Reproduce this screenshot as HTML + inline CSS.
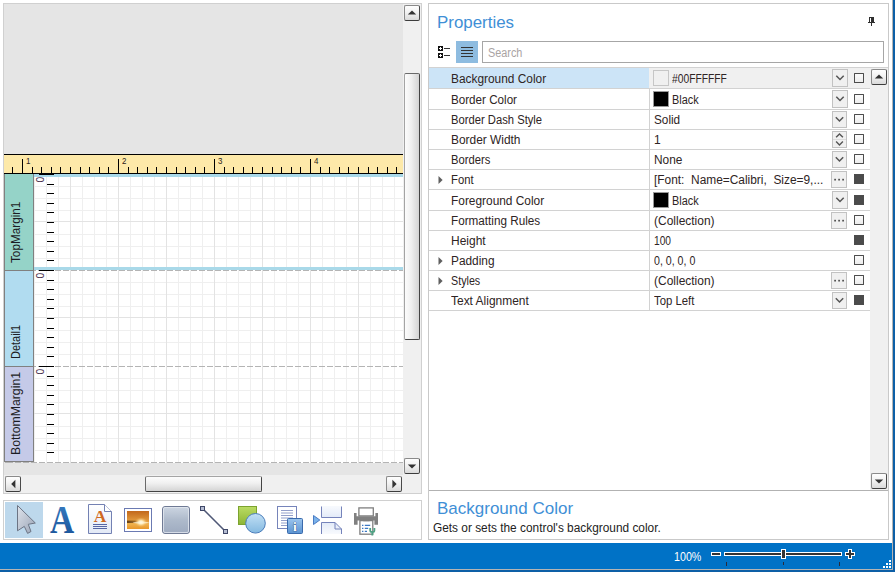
<!DOCTYPE html>
<html><head><meta charset="utf-8"><title>Report Designer</title>
<style>
*{box-sizing:border-box;margin:0;padding:0}
html,body{width:895px;height:572px;overflow:hidden;background:#fff;font-family:"Liberation Sans",sans-serif;font-size:12px;color:#2e2424}
div,i,span,svg{position:absolute}
i{display:block}
#des{left:3px;top:3px;width:419px;height:491px;background:#e5e5e5;border:1px solid #d0d0d0}
#ruler{left:4px;top:154px;width:399px;height:20px;background:#fde9a9;border-top:1px solid #000;border-bottom:1px solid #000}
.tk{top:12px;width:1px;height:6px;background:#000}
.tk.L{top:4px;height:14px}
.rl{top:0.5px;font-size:9px;line-height:10px;color:#2a2218;margin-left:-0.5px;transform:scaleX(0.88);transform-origin:0 0}
#grid{left:34px;top:174px;width:369px;height:289px;background-color:#fff;
 background-image:
 linear-gradient(to right,#e3e3e3 1px,transparent 1px),
 linear-gradient(to bottom,transparent 12px,#efefef 12px 13px,transparent 13px 24px,#efefef 24px 25px,transparent 25px 36px,#efefef 36px 37px,transparent 37px 47px,#e3e3e3 47px 48px,transparent 48px 60px,#efefef 60px 61px,transparent 61px 72px,#efefef 72px 73px,transparent 73px 84px,#efefef 84px 85px,transparent 85px),
 linear-gradient(to right,#efefef 1px,transparent 1px);
 background-size:48px 48px,100% 96px,12px 12px;
 background-position:-12px 0,0 0,0 0;}
.band{left:4px;width:30px;border-left:1px solid #808080;border-right:1px solid #808080;border-top:1px solid #808080}
.band span{left:2px;bottom:7px;height:17px;line-height:17px;white-space:nowrap;transform-origin:0 100%;transform:translate(17px,0) rotate(-90deg);font-size:13.33px;color:#1c1c24}
.v0{left:39px;width:15px;height:1px;background:#000}
.vt{left:47px;width:7px;height:1px;background:#000}
.z{left:36.3px;width:9px;height:9px;font-size:10.3px;line-height:9px;text-align:center;color:#4a3050;transform:rotate(-90deg)}
.sb{width:16px;height:16px;border:1px solid;border-color:#8a8a8a #4a4a4a #3c3c3c #8a8a8a;border-radius:2px;background:linear-gradient(#fefefe,#f2f2f2 45%,#dadada)}
.thumb{border:1px solid;border-color:#6a6a6a #444 #444 #a4a4a4;border-radius:2px}
.thumb.h{border-color:#a4a4a4 #444 #444 #6a6a6a}
.dash{left:5px;width:398px;height:1px;background:repeating-linear-gradient(to right,#b4b4b4 0 6px,transparent 6px 8px);background-position:2px 0}
#tools{left:3px;top:500px;width:419px;height:40px;background:#fff;border:1px solid #d0d0d0}
#prop{left:428px;top:3px;width:461px;height:537px;background:#fff;border:1px solid #c9c9c9}
.row{left:429px;width:441px}
.row .nm{left:0;top:0;width:220px;height:100%;white-space:nowrap}
.row .nm .t{left:22px;top:1px}
.row.sel .nm{background:#cce4f7}
.row.sel{background:#f0f0f0}
.vl{top:1px;white-space:nowrap}
.exp{left:9px}
.sw{left:224px;width:16px;height:16px;border:1px solid #c4c4c4}
.btn{left:403px;width:15px;background:#f0f0f0;border:1px solid #c2c2c2}
.btn svg{left:0;top:0}
.cb{left:425px;width:10px;height:10px;border:1px solid #4c4c4c;background:linear-gradient(#fbfbfb,#ececec);border-radius:0.5px}
.cb.on{background:#4b4b4b;border-color:#4b4b4b;border-radius:0}
.hl{left:429px;width:441px;height:1px;background:#d2d2d2}
#status{left:0;top:543px;width:895px;height:29px;background:#0072c6}
.ttl{font-size:17px;line-height:22px;color:#3f8fd6;white-space:nowrap}
</style></head><body>
<div id="des"></div>
<div id="ruler"><i class="tk" style="left:8px"></i><i class="tk L" style="left:18px"></i><span class="rl" style="left:22px">1</span><i class="tk" style="left:28px"></i><i class="tk" style="left:37px"></i><i class="tk" style="left:47px"></i><i class="tk" style="left:56px"></i><i class="tk" style="left:66px"></i><i class="tk" style="left:76px"></i><i class="tk" style="left:85px"></i><i class="tk" style="left:95px"></i><i class="tk" style="left:104px"></i><i class="tk L" style="left:114px"></i><span class="rl" style="left:118px">2</span><i class="tk" style="left:124px"></i><i class="tk" style="left:133px"></i><i class="tk" style="left:143px"></i><i class="tk" style="left:152px"></i><i class="tk" style="left:162px"></i><i class="tk" style="left:172px"></i><i class="tk" style="left:181px"></i><i class="tk" style="left:191px"></i><i class="tk" style="left:200px"></i><i class="tk L" style="left:210px"></i><span class="rl" style="left:214px">3</span><i class="tk" style="left:220px"></i><i class="tk" style="left:229px"></i><i class="tk" style="left:239px"></i><i class="tk" style="left:248px"></i><i class="tk" style="left:258px"></i><i class="tk" style="left:268px"></i><i class="tk" style="left:277px"></i><i class="tk" style="left:287px"></i><i class="tk" style="left:296px"></i><i class="tk L" style="left:306px"></i><span class="rl" style="left:310px">4</span><i class="tk" style="left:316px"></i><i class="tk" style="left:325px"></i><i class="tk" style="left:335px"></i><i class="tk" style="left:344px"></i><i class="tk" style="left:354px"></i><i class="tk" style="left:364px"></i><i class="tk" style="left:373px"></i><i class="tk" style="left:383px"></i><i class="tk" style="left:392px"></i></div>
<div id="grid"></div>
<div class="band" style="top:174px;height:96px;background:#95d3c8;border-top:none"><span style="transform:translate(17px,0) rotate(-90deg) scaleX(0.8811);">TopMargin1</span></div>
<div class="band" style="top:270px;height:96px;background:#b1dcf0;"><span style="transform:translate(17px,0) rotate(-90deg) scaleX(0.8235);">Detail1</span></div>
<div class="band" style="top:366px;height:96px;background:#c5cae8;border-bottom:1px solid #808080"><span style="transform:translate(17px,0) rotate(-90deg) scaleX(0.9184);bottom:6px">BottomMargin1</span></div>
<i style="left:34px;top:174px;width:369px;height:3px;background:#a9d9e9"></i>
<i style="left:34px;top:267px;width:369px;height:3px;background:#a9d9e9"></i>
<i class="dash" style="top:270px;left:34px;width:369px;background-position:5px 0"></i>
<i class="dash" style="top:366px;left:34px;width:369px;background-position:5px 0"></i>
<i class="dash" style="top:462px"></i>
<i class="v0" style="top:174px"></i><span class="z" style="top:175px">0</span><i class="vt" style="top:184px"></i><i class="vt" style="top:193px"></i><i class="vt" style="top:203px"></i><i class="vt" style="top:212px"></i><i class="vt" style="top:222px"></i><i class="vt" style="top:232px"></i><i class="vt" style="top:241px"></i><i class="vt" style="top:251px"></i><i class="vt" style="top:260px"></i><i class="v0" style="top:270px"></i><span class="z" style="top:271px">0</span><i class="vt" style="top:280px"></i><i class="vt" style="top:289px"></i><i class="vt" style="top:299px"></i><i class="vt" style="top:308px"></i><i class="vt" style="top:318px"></i><i class="vt" style="top:328px"></i><i class="vt" style="top:337px"></i><i class="vt" style="top:347px"></i><i class="vt" style="top:356px"></i><i class="v0" style="top:366px"></i><span class="z" style="top:367px">0</span><i class="vt" style="top:376px"></i><i class="vt" style="top:385px"></i><i class="vt" style="top:395px"></i><i class="vt" style="top:404px"></i><i class="vt" style="top:414px"></i><i class="vt" style="top:424px"></i><i class="vt" style="top:433px"></i><i class="vt" style="top:443px"></i><i class="vt" style="top:452px"></i>
<i style="left:403px;top:4px;width:18px;height:471px;background:#f0f0f0"></i>
<i style="left:4px;top:475px;width:417px;height:18px;background:#f0f0f0"></i>
<div class="sb" style="left:404px;top:5px"><svg width="14" height="14" viewBox="0 0 14 14"><path d="M2.8 8.6 L7 4.4 L11.2 8.6 Z" fill="#333"/></svg></div>
<div class="sb" style="left:404px;top:458px"><svg width="14" height="14" viewBox="0 0 14 14"><path d="M2.8 5.4 L7 9.6 L11.2 5.4 Z" fill="#333"/></svg></div>
<div class="thumb" style="left:404px;top:73px;width:16px;height:267px;background:linear-gradient(to right,#fcfcfc,#f0f0f0 45%,#d4d4d4)"></div>
<div class="sb" style="left:5px;top:476px"><svg width="14" height="14" viewBox="0 0 14 14"><path d="M9.4 2.8 L5.2 7 L9.4 11.2 Z" fill="#333"/></svg></div>
<div class="sb" style="left:386px;top:476px"><svg width="14" height="14" viewBox="0 0 14 14"><path d="M5.4 2.8 L9.6 7 L5.4 11.2 Z" fill="#333"/></svg></div>
<div class="thumb h" style="left:145px;top:476px;width:117px;height:16px;background:linear-gradient(#fcfcfc,#f0f0f0 45%,#d4d4d4)"></div>
<div id="tools"></div>
<i style="left:5px;top:502px;width:38px;height:36px;background:#bdd8ec"></i>
<svg style="left:4px;top:501px" width="417" height="38" viewBox="4 501 417 38">
<defs>
<linearGradient id="gA" x1="0" y1="0" x2="0" y2="1"><stop offset="0" stop-color="#3a80c6"/><stop offset="1" stop-color="#174f94"/></linearGradient>
<linearGradient id="gP" x1="0" y1="0" x2="1" y2="1"><stop offset="0" stop-color="#dfe4ec"/><stop offset="1" stop-color="#9aa4b6"/></linearGradient>
<linearGradient id="gPg" x1="0" y1="0" x2="0" y2="1"><stop offset="0" stop-color="#ffffff"/><stop offset="1" stop-color="#e2e9f6"/></linearGradient>
<linearGradient id="gPn" x1="0" y1="0" x2="0" y2="1"><stop offset="0" stop-color="#cdd6e2"/><stop offset="0.5" stop-color="#aebacb"/><stop offset="1" stop-color="#9eabc0"/></linearGradient>
<linearGradient id="gGr" x1="0" y1="0" x2="0" y2="1"><stop offset="0" stop-color="#bbdc64"/><stop offset="1" stop-color="#8db535"/></linearGradient>
<linearGradient id="gCi" x1="0" y1="0" x2="0" y2="1"><stop offset="0" stop-color="#c2e0f5"/><stop offset="1" stop-color="#84b9e0"/></linearGradient>
<linearGradient id="gIn" x1="0" y1="0" x2="0" y2="1"><stop offset="0" stop-color="#9cc5ee"/><stop offset="1" stop-color="#5a93d2"/></linearGradient>
<linearGradient id="gSk" x1="0" y1="0" x2="0" y2="1"><stop offset="0" stop-color="#c2681b"/><stop offset="0.55" stop-color="#e29a3d"/><stop offset="0.72" stop-color="#efb24e"/><stop offset="1" stop-color="#e8962a"/></linearGradient>
<linearGradient id="gHz" x1="0" y1="0" x2="1" y2="0"><stop offset="0" stop-color="#4a2e10" stop-opacity="0.85"/><stop offset="0.6" stop-color="#6a4418" stop-opacity="0.6"/><stop offset="1" stop-color="#8a5a20" stop-opacity="0"/></linearGradient>
<radialGradient id="gSun" cx="0.5" cy="0.5" r="0.5"><stop offset="0" stop-color="#fff"/><stop offset="0.35" stop-color="#fff3c8" stop-opacity="0.9"/><stop offset="1" stop-color="#f0b050" stop-opacity="0"/></radialGradient>
<linearGradient id="gFade" x1="0" y1="0" x2="0" y2="1"><stop offset="0" stop-color="#e6edf9" stop-opacity="0.3"/><stop offset="1" stop-color="#e2eaf8"/></linearGradient>
<linearGradient id="gFade2" x1="0" y1="0" x2="0" y2="1"><stop offset="0" stop-color="#e2eaf8"/><stop offset="1" stop-color="#e6edf9" stop-opacity="0.3"/></linearGradient>
</defs>
<!-- pointer -->
<path d="M17.5 505.5 L35.3 523 L28.3 524.3 L31 531.5 L27.6 533.4 L24.3 526.4 L17.5 530.8 Z" fill="url(#gP)" stroke="#6c7484" stroke-width="1" stroke-linejoin="round"/>
<!-- label A -->
<text x="62" y="533" text-anchor="middle" font-family="Liberation Serif,serif" font-weight="bold" font-size="39" fill="url(#gA)" transform="translate(62 0) scale(0.86 1) translate(-62 0)">A</text>
<!-- rich text -->
<path d="M88.5 504.5 H104.5 L111.5 511.5 V533.5 H88.5 Z" fill="url(#gPg)" stroke="#7381b3"/>
<path d="M104.5 504.5 V511.5 H111.5" fill="#fff" stroke="#7381b3"/>
<text x="100" y="521.6" text-anchor="middle" font-family="Liberation Serif,serif" font-weight="bold" font-size="17.5" fill="#d0691f">A</text>
<path d="M93 524.5 H107 M93 526.5 H107 M93 528.5 H107" stroke="#5666a6" stroke-width="1"/>
<!-- picture -->
<rect x="124.5" y="508.5" width="27" height="23" fill="#fff" stroke="#6b7ab2"/>
<rect x="127" y="511" width="22" height="18" fill="url(#gSk)"/>
<rect x="127" y="520.6" width="14" height="2.4" fill="url(#gHz)"/>
<ellipse cx="141" cy="522.3" rx="6.5" ry="5" fill="url(#gSun)"/><ellipse cx="141" cy="522.6" rx="8" ry="1" fill="#fff6d8" fill-opacity="0.7"/>
<!-- panel -->
<rect x="162.5" y="506.5" width="27" height="27" rx="2.5" fill="url(#gPn)" stroke="#6f7a94"/>
<rect x="163.5" y="507.5" width="25" height="25" rx="1.5" fill="none" stroke="#e4e9f0" stroke-opacity="0.8"/>
<!-- line -->
<path d="M203 509 L225 531" stroke="#4f5876" stroke-width="1.6"/>
<rect x="200.5" y="506.5" width="4" height="4" fill="#b4bcd2" stroke="#3f4868"/>
<rect x="223.5" y="529.5" width="4" height="4" fill="#b4bcd2" stroke="#3f4868"/>
<!-- shape -->
<rect x="238.5" y="506.5" width="18" height="18" fill="url(#gGr)" stroke="#7ca32f"/>
<circle cx="255.5" cy="523.3" r="9.8" fill="url(#gCi)" stroke="#4a7cba"/>
<!-- page info -->
<rect x="277.5" y="506.5" width="19" height="22" fill="#fff" stroke="#7684ba"/>
<path d="M281 510.5 H293 M281 513 H293 M281 515.5 H293 M281 518 H293 M281 520.5 H293 M281 523 H293 M281 525.5 H293" stroke="#8794c4" stroke-width="0.9"/>
<rect x="287.5" y="518.5" width="15" height="15" rx="1" fill="url(#gIn)" stroke="#3a6aac"/>
<text x="295" y="531" text-anchor="middle" font-family="Liberation Serif,serif" font-weight="bold" font-size="13.5" fill="#fff" stroke="#1d3f78" stroke-width="0.7" paint-order="stroke">i</text>
<!-- page break -->
<path d="M313.5 515.5 L319.8 520 L313.5 524.5 Z" fill="#7ab2ea" stroke="#4a7cc4"/>
<rect x="321" y="506" width="21" height="11.5" fill="url(#gFade)"/>
<path d="M321.5 506.5 V517.5 H341.5 V506.5" fill="none" stroke="#7583bb"/>
<path d="M321 522.5 H335 L342 529.5 V534 H321 Z" fill="url(#gFade2)"/>
<path d="M321.5 534 V522.5 H335 L341.5 529 V534 M335 522.5 V529 H341.5" fill="none" stroke="#7583bb"/>
<!-- printer -->
<path d="M354 513 H356.6 V516.2 H375.4 V513 H378 V524.7 H374.4 V520.6 H357.6 V524.7 H354 Z" fill="#808080"/>
<rect x="358.9" y="507.9" width="14.4" height="8" fill="#fff" stroke="#7f7f7f" stroke-width="1.3"/>
<rect x="359.9" y="520.6" width="12.9" height="13.6" fill="#fff" stroke="#7f7f7f" stroke-width="1.3"/>
<path d="M363.2 521.3 L364.6 518.8 H368.2 L369.6 521.3 Z" fill="#7f7f7f"/>
<path d="M362 525.3 H363.4 M364.8 525.3 H370.2 M362 528.4 H363.4 M364.8 528.4 H368.2 M362 531.4 H363.4 M364.8 531.4 H367" stroke="#3b78c4" stroke-width="1.3"/>
<path d="M370.2 528 V530.4 Q370.2 532 372.2 532 Q374.4 532 374.4 530.4 V528 M372.3 532 V535.5" fill="none" stroke="#4fa184" stroke-width="1.8"/>
</svg>

<div id="prop"></div>
<div class="ttl" style="left:437px;top:12px;transform:scaleX(0.9937);transform-origin:0 50%;">Properties</div>
<svg style="left:868px;top:17px" width="8" height="10" viewBox="0 0 8 10" shape-rendering="crispEdges"><g fill="#2f2f2f"><rect x="1" y="0" width="5" height="1"/><rect x="1" y="0" width="1" height="5"/><rect x="3" y="0" width="3" height="5"/><rect x="0" y="5" width="7" height="1"/><rect x="3" y="6" width="1" height="3"/></g></svg>
<svg style="left:438px;top:46px" width="12" height="13" viewBox="0 0 12 13"><g fill="#111"><rect x="0" y="0" width="5" height="5"/><rect x="0" y="7" width="5" height="5"/><rect x="6" y="2" width="6" height="1" fill="#333"/><rect x="6" y="9" width="6" height="1" fill="#333"/></g><g fill="#fff"><rect x="2" y="1" width="1" height="3"/><rect x="1" y="2" width="3" height="1"/><rect x="2" y="8" width="1" height="3"/><rect x="1" y="9" width="3" height="1"/></g></svg>
<i style="left:456px;top:41px;width:22px;height:22px;background:#8ebce0"></i>
<i style="left:461px;top:47px;width:12px;height:1px;background:#333;box-shadow:0 3px 0 #333,0 6px 0 #333,0 9px 0 #333"></i>
<div style="left:482px;top:41px;width:402px;height:22px;border:1px solid #a6a6a6;background:#fff"><span style="left:5px;top:1px;line-height:20px;color:#aaa3a3;transform:scaleX(0.905);transform-origin:0 50%;">Search</span></div>
<i class="hl" style="top:67px;width:459px"></i>
<i style="left:649px;top:68px;width:1px;height:242px;background:#d2d2d2"></i>
<i style="left:870px;top:68px;width:18px;height:422px;background:#f0f0f0"></i>
<div class="row sel" style="top:68px;height:20px">
<div class="nm" style="line-height:20px"><span class="t" style="transform:scaleX(0.99);transform-origin:0 50%;">Background Color</span></div>
<div class="sw" style="background:#f0f0f0;border-color:#c6c6c6;top:2px"></div>
<div class="vl" style="left:243px;line-height:20px;transform:scaleX(0.8575);transform-origin:0 50%;">#00FFFFFF</div>
<div class="btn" style="top:1px;height:18px;width:16px"><svg width="14" height="16" viewBox="0 0 14 16"><path d="M3.3 5.8 L7.0 9.5 L10.7 5.8" fill="none" stroke="#555" stroke-width="1.5"/></svg></div>
<div class="cb" style="top:5px"></div>
</div>
<i class="hl" style="top:88px"></i>
<div class="row" style="top:89px;height:20px">
<div class="nm" style="line-height:20px"><span class="t" style="transform:scaleX(0.9701);transform-origin:0 50%;">Border Color</span></div>
<div class="sw" style="background:#000;border-color:#9a9a9a;top:2px"></div>
<div class="vl" style="left:243px;line-height:20px;transform:scaleX(0.9063);transform-origin:0 50%;">Black</div>
<div class="btn" style="top:1px;height:18px;width:16px"><svg width="14" height="16" viewBox="0 0 14 16"><path d="M3.3 5.8 L7.0 9.5 L10.7 5.8" fill="none" stroke="#555" stroke-width="1.5"/></svg></div>
<div class="cb" style="top:5px"></div>
</div>
<i class="hl" style="top:109px"></i>
<div class="row" style="top:110px;height:19px">
<div class="nm" style="line-height:19px"><span class="t" style="transform:scaleX(0.9355);transform-origin:0 50%;">Border Dash Style</span></div>
<div class="vl" style="left:225px;line-height:19px;transform:scaleX(0.9804);transform-origin:0 50%;">Solid</div>
<div class="btn" style="top:1px;height:17px;width:15px"><svg width="14" height="16" viewBox="0 0 14 16"><path d="M2.8 5.3 L6.5 9.0 L10.2 5.3" fill="none" stroke="#555" stroke-width="1.5"/></svg></div>
<div class="cb" style="top:4px"></div>
</div>
<i class="hl" style="top:129px"></i>
<div class="row" style="top:130px;height:19px">
<div class="nm" style="line-height:19px"><span class="t" style="transform:scaleX(0.992);transform-origin:0 50%;">Border Width</span></div>
<div class="vl" style="left:225px;line-height:19px;">1</div>
<div class="btn" style="top:1px;height:17px"><svg width="14" height="16" viewBox="0 0 14 16"><path d="M0 7.5 H13" stroke="#dcdcdc"/><path d="M3.1 5.3 L6.5 1.9 L9.9 5.3" fill="none" stroke="#555" stroke-width="1.4"/><path d="M3.1 9.6 L6.5 13 L9.9 9.6" fill="none" stroke="#555" stroke-width="1.4"/></svg></div>
<div class="cb" style="top:4px"></div>
</div>
<i class="hl" style="top:149px"></i>
<div class="row" style="top:150px;height:19px">
<div class="nm" style="line-height:19px"><span class="t" style="transform:scaleX(0.9353);transform-origin:0 50%;">Borders</span></div>
<div class="vl" style="left:225px;line-height:19px;transform:scaleX(0.9892);transform-origin:0 50%;">None</div>
<div class="btn" style="top:1px;height:17px;width:15px"><svg width="14" height="16" viewBox="0 0 14 16"><path d="M2.8 5.3 L6.5 9.0 L10.2 5.3" fill="none" stroke="#555" stroke-width="1.5"/></svg></div>
<div class="cb" style="top:4px"></div>
</div>
<i class="hl" style="top:169px"></i>
<div class="row" style="top:170px;height:19px">
<div class="nm" style="line-height:19px"><span class="t" style="transform:scaleX(0.9401);transform-origin:0 50%;">Font</span></div>
<svg class="exp" width="6" height="10" viewBox="0 0 6 10" style="top:5px"><path d="M0.5 1 L4.6 5 L0.5 9 Z" fill="#5f5f5f"/></svg>
<div class="vl" style="left:225px;line-height:19px;transform:scaleX(0.9918);transform-origin:0 50%;">[Font:&nbsp; Name=Calibri,&nbsp; Size=9,...</div>
<div class="btn" style="top:1px;height:17px;left:402px;width:16px"><svg width="15" height="16" viewBox="0 0 15 16"><rect x="2.2" y="6.8" width="1.8" height="1.7" fill="#555"/><rect x="6.2" y="6.8" width="1.8" height="1.7" fill="#555"/><rect x="10.2" y="6.8" width="1.8" height="1.7" fill="#555"/></svg></div>
<div class="cb on" style="top:4px"></div>
</div>
<i class="hl" style="top:189px"></i>
<div class="row" style="top:190px;height:20px">
<div class="nm" style="line-height:20px"><span class="t" style="transform:scaleX(0.9909);transform-origin:0 50%;">Foreground Color</span></div>
<div class="sw" style="background:#000;border-color:#9a9a9a;top:2px"></div>
<div class="vl" style="left:243px;line-height:20px;transform:scaleX(0.9063);transform-origin:0 50%;">Black</div>
<div class="btn" style="top:1px;height:18px;width:16px"><svg width="14" height="16" viewBox="0 0 14 16"><path d="M3.3 5.8 L7.0 9.5 L10.7 5.8" fill="none" stroke="#555" stroke-width="1.5"/></svg></div>
<div class="cb on" style="top:5px"></div>
</div>
<i class="hl" style="top:210px"></i>
<div class="row" style="top:211px;height:19px">
<div class="nm" style="line-height:19px"><span class="t" style="transform:scaleX(0.9763);transform-origin:0 50%;">Formatting Rules</span></div>
<div class="vl" style="left:225px;line-height:19px;transform:scaleX(0.9985);transform-origin:0 50%;">(Collection)</div>
<div class="btn" style="top:1px;height:17px;left:402px;width:16px"><svg width="15" height="16" viewBox="0 0 15 16"><rect x="2.2" y="6.8" width="1.8" height="1.7" fill="#555"/><rect x="6.2" y="6.8" width="1.8" height="1.7" fill="#555"/><rect x="10.2" y="6.8" width="1.8" height="1.7" fill="#555"/></svg></div>
<div class="cb" style="top:4px"></div>
</div>
<i class="hl" style="top:230px"></i>
<div class="row" style="top:231px;height:19px">
<div class="nm" style="line-height:19px"><span class="t" style="transform:scaleX(0.9985);transform-origin:0 50%;">Height</span></div>
<div class="vl" style="left:225px;line-height:19px;transform:scaleX(0.8502);transform-origin:0 50%;">100</div>
<div class="cb on" style="top:4px"></div>
</div>
<i class="hl" style="top:250px"></i>
<div class="row" style="top:251px;height:19px">
<div class="nm" style="line-height:19px"><span class="t" style="transform:scaleX(0.9893);transform-origin:0 50%;">Padding</span></div>
<svg class="exp" width="6" height="10" viewBox="0 0 6 10" style="top:5px"><path d="M0.5 1 L4.6 5 L0.5 9 Z" fill="#5f5f5f"/></svg>
<div class="vl" style="left:225px;line-height:19px;transform:scaleX(0.8846);transform-origin:0 50%;">0, 0, 0, 0</div>
<div class="cb" style="top:4px"></div>
</div>
<i class="hl" style="top:270px"></i>
<div class="row" style="top:271px;height:19px">
<div class="nm" style="line-height:19px"><span class="t" style="transform:scaleX(0.8936);transform-origin:0 50%;">Styles</span></div>
<svg class="exp" width="6" height="10" viewBox="0 0 6 10" style="top:5px"><path d="M0.5 1 L4.6 5 L0.5 9 Z" fill="#5f5f5f"/></svg>
<div class="vl" style="left:225px;line-height:19px;transform:scaleX(0.9985);transform-origin:0 50%;">(Collection)</div>
<div class="btn" style="top:1px;height:17px;left:402px;width:16px"><svg width="15" height="16" viewBox="0 0 15 16"><rect x="2.2" y="6.8" width="1.8" height="1.7" fill="#555"/><rect x="6.2" y="6.8" width="1.8" height="1.7" fill="#555"/><rect x="10.2" y="6.8" width="1.8" height="1.7" fill="#555"/></svg></div>
<div class="cb" style="top:4px"></div>
</div>
<i class="hl" style="top:290px"></i>
<div class="row" style="top:291px;height:19px">
<div class="nm" style="line-height:19px"><span class="t" style="transform:scaleX(0.9966);transform-origin:0 50%;">Text Alignment</span></div>
<div class="vl" style="left:225px;line-height:19px;transform:scaleX(0.9455);transform-origin:0 50%;">Top Left</div>
<div class="btn" style="top:1px;height:17px;width:15px"><svg width="14" height="16" viewBox="0 0 14 16"><path d="M2.8 5.3 L6.5 9.0 L10.2 5.3" fill="none" stroke="#555" stroke-width="1.5"/></svg></div>
<div class="cb on" style="top:4px"></div>
</div>
<i class="hl" style="top:310px"></i>
<div class="sb" style="left:871px;top:69px"><svg width="14" height="14" viewBox="0 0 14 14"><path d="M2.8 8.6 L7 4.4 L11.2 8.6 Z" fill="#333"/></svg></div>
<div class="sb" style="left:871px;top:473px"><svg width="14" height="14" viewBox="0 0 14 14"><path d="M2.8 5.4 L7 9.6 L11.2 5.4 Z" fill="#333"/></svg></div>
<i style="left:429px;top:490px;width:459px;height:1px;background:#b2b2b2"></i>
<div class="ttl" style="left:437px;top:498px">Background Color</div>
<div style="left:433px;top:519px;line-height:18px;white-space:nowrap;transform:scaleX(0.9884);transform-origin:0 50%;;color:#222">Gets or sets the control's background color.</div>
<div id="status"><span style="left:674px;top:5px;color:#fff;line-height:18px;transform:scaleX(0.8897);transform-origin:0 50%;">100%</span>
<i style="left:711px;top:9px;width:10px;height:4px;background:#333;border:1px solid #fff"></i>
<i style="left:724px;top:9px;width:118px;height:4px;background:#333;border:1px solid #fff"></i>
<i style="left:781px;top:6px;width:5px;height:10px;background:#333;border:1px solid #fff"></i>
<svg style="left:845px;top:6px" width="10" height="10" viewBox="0 0 10 10"><path d="M3 0 H7 V3 H10 V7 H7 V10 H3 V7 H0 V3 H3 Z" fill="#fff"/><path d="M4 1 H6 V4 H9 V6 H6 V9 H4 V6 H1 V4 H4 Z" fill="#333"/></svg>
<i style="left:726px;top:19px;width:1px;height:4px;background:#2a2a3a"></i>
<i style="left:783px;top:19px;width:1px;height:3px;background:#2a2a3a"></i>
<i style="left:839px;top:19px;width:1px;height:4px;background:#2a2a3a"></i>
<i style="left:889px;top:17px;width:2px;height:2px;background:#fff;box-shadow:0 3px 0 #fff,0 6px 0 #fff,-3px 3px 0 #fff,-3px 6px 0 #fff,-6px 6px 0 #fff"></i>
<i style="left:0;top:26px;width:893px;height:1px;background:#b4b4b4"></i>
<i style="left:0;top:27px;width:895px;height:2px;background:#0d5fa6"></i>
</div>
<i style="left:892px;top:0;width:1px;height:570px;background:#b4b4b4"></i>
<i style="left:893px;top:0;width:2px;height:572px;background:#0d5fa6"></i>
</body></html>
